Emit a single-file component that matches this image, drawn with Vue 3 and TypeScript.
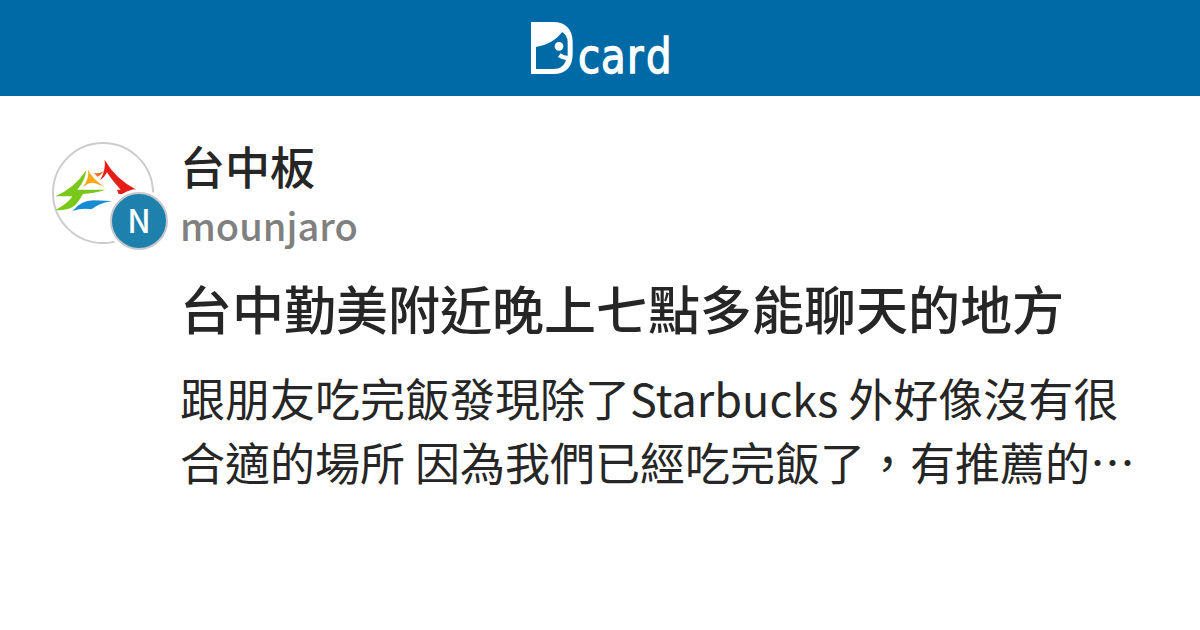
<script setup lang="ts">
interface Post {
  forum: string
  author: string
  initial: string
  title: string
  excerpt: string[]
}

const post: Post = {
  forum: '台中板',
  author: 'mounjaro',
  initial: 'N',
  title: '台中勤美附近晚上七點多能聊天的地方',
  excerpt: [
    '跟朋友吃完飯發現除了Starbucks 外好像沒有很',
    '合適的場所 因為我們已經吃完飯了，有推薦的…',
  ],
}
</script>

<template>
  <div class="card" lang="zh-TW">
    <header class="bar">
      <svg class="logo" viewBox="33 36 414 156" role="img" aria-label="Dcard">
        <path fill="#fff" fill-rule="evenodd" d="M33 36H99C137 36 158 58 158 95V131C158 170 138 192 100 192H33Z
          M48 111V177H101C121 177 133 167 138 150Q128 150 114 141L122 130Q131 138 143 137V95Q143 78 127 66Q98 103 48 111Z" />
        <circle cx="117" cy="109" r="13" fill="#fff" />
        <text class="wordmark" transform="scale(0.85 1)" x="204.7 286 377.5 445" y="190">card</text>
      </svg>
    </header>
    <main class="post">
      <div class="avatar">
        <svg class="emblem" viewBox="36 36 306 306" aria-hidden="true">
          <path fill="#f26a1b" d="M192 121Q184 132 161 129Q168 134 172 140Q184 136 192 121Z" />
          <path fill="#f8a912" d="M144 119Q149 143 129 171Q146 158 157 158Q172 160 194 171Q158 147 144 119Z" />
          <path fill="#e61e19" d="M194 89Q198 121 180 151Q193 143 201 127Q216 151 242 179H231L236 192H250L292 181Q226 147 194 89Z" />
          <path fill="#7ac81c" d="M139 121Q102 175 46 199H97Q85 220 46 240Q88 243 106 225Q118 213 129 192Q160 190 197 179H112Q134 155 139 121Z" />
          <path fill="#168bd2" d="M98 243Q122 212 160 211L216 213Q179 219 154 238Q126 233 98 243Z" />
        </svg>
        <span class="badge">{{ post.initial }}</span>
      </div>
      <div class="body">
        <div class="forum">{{ post.forum }}</div>
        <div class="author">{{ post.author }}</div>
        <h1 class="title">{{ post.title }}</h1>
        <p class="excerpt">
          <span v-for="line in post.excerpt" :key="line" class="line">{{ line }}</span>
        </p>
      </div>
    </main>
  </div>
</template>

<style>
body {
  margin: 0;
}
</style>

<style scoped>
.card {
  width: 1200px;
  height: 630px;
  overflow: hidden;
  background: #fff;
  color: #262626;
  font-family: "Noto Sans CJK TC", "Noto Sans", sans-serif;
}

.bar {
  display: flex;
  align-items: center;
  justify-content: center;
  height: 96px;
  background: #006aa6;
}

.logo {
  display: block;
  width: 138px;
  height: 52px;
  overflow: visible;
}

.wordmark {
  fill: #fff;
  stroke: #fff;
  stroke-width: 4px;
  font-family: "DejaVu Sans", sans-serif;
  font-size: 142px;
}

.post {
  display: flex;
  gap: 26px;
  padding: 46px 52px 0;
}

.avatar {
  position: relative;
  flex: none;
  box-sizing: border-box;
  width: 102px;
  height: 102px;
  border: 2px solid #ccc;
  border-radius: 50%;
}

.emblem {
  display: block;
  width: 102px;
  height: 102px;
  margin: -2px;
}

.badge {
  position: absolute;
  left: 56px;
  top: 48px;
  box-sizing: border-box;
  width: 58px;
  height: 58px;
  border: 2px solid #c5c9cb;
  border-radius: 50%;
  background: #1e80ad;
  box-shadow: 0 0 0 3px #fff;
  color: #fff;
  font-size: 32px;
  font-weight: 500;
  line-height: 51px;
  text-align: center;
}

.body {
  flex: 1;
  white-space: nowrap;
}

.forum {
  font-size: 45px;
  font-weight: 500;
  line-height: 47px;
}

.author {
  margin-top: 11px;
  color: #808080;
  font-size: 38px;
  font-weight: 500;
  line-height: 49px;
}

.title {
  margin: 23px 0 0;
  font-size: 52px;
  font-weight: 500;
  line-height: 71px;
}

.excerpt {
  margin: 23px 0 0;
  font-size: 45px;
  line-height: 64px;
}

.line {
  display: block;
}
</style>
